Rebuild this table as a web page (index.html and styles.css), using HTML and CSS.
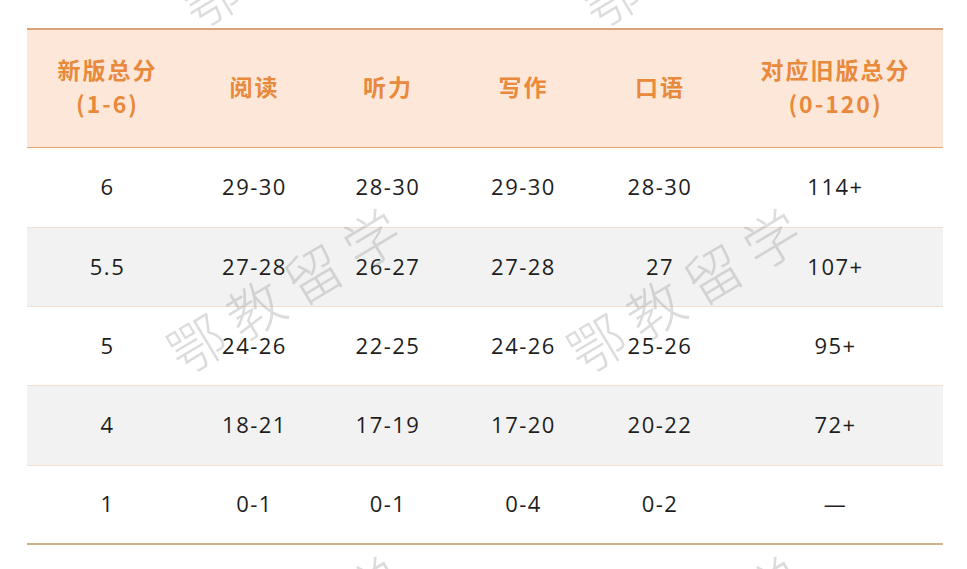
FILE: index.html
```html
<!DOCTYPE html>
<html lang="zh-CN">
<head>
<meta charset="utf-8">
<title>新版托福分数对照</title>
<link rel="stylesheet" href="styles.css">
</head>
<body>
<div class="page">
  <table class="score-table">
    <colgroup>
      <col class="c1"><col class="c2"><col class="c3"><col class="c4"><col class="c5"><col class="c6">
    </colgroup>
    <thead>
      <tr>
        <th>新版总分<br>(1-6)</th>
        <th>阅读</th>
        <th>听力</th>
        <th>写作</th>
        <th>口语</th>
        <th>对应旧版总分<br>(0-120)</th>
      </tr>
    </thead>
    <tbody>
      <tr class="tall"><td>6</td><td>29-30</td><td>28-30</td><td>29-30</td><td>28-30</td><td>114+</td></tr>
      <tr class="alt"><td>5.5</td><td>27-28</td><td>26-27</td><td>27-28</td><td>27</td><td>107+</td></tr>
      <tr><td>5</td><td>24-26</td><td>22-25</td><td>24-26</td><td>25-26</td><td>95+</td></tr>
      <tr class="alt tall"><td>4</td><td>18-21</td><td>17-19</td><td>17-20</td><td>20-22</td><td>72+</td></tr>
      <tr class="last"><td>1</td><td>0-1</td><td>0-1</td><td>0-4</td><td>0-2</td><td>—</td></tr>
    </tbody>
  </table>
  <div class="watermarks" aria-hidden="true">
    <span class="wm wm1">鄂教留学</span>
    <span class="wm wm2">鄂教留学</span>
    <span class="wm wm3">鄂教留学</span>
    <span class="wm wm4">鄂教留学</span>
    <span class="wm wm5">鄂教留学</span>
    <span class="wm wm6">鄂教留学</span>
  </div>
</div>
</body>
</html>
```

FILE: styles.css
```css
html, body {
  margin: 0;
  padding: 0;
  background: #ffffff;
}

.page {
  position: relative;
  width: 967px;
  height: 569px;
  overflow: hidden;
  padding: 28px 0 0 27px;
  box-sizing: border-box;
  font-family: "Open Sans", "Noto Sans CJK SC", sans-serif;
}

.score-table {
  width: 916px;
  border-collapse: collapse;
  table-layout: fixed;
}

.c1 { width: 161px; }
.c2 { width: 133px; }
.c3 { width: 134px; }
.c4 { width: 137px; }
.c5 { width: 136px; }
.c6 { width: 215px; }

.score-table th {
  height: 112px;
  padding: 0 0 5px;
  background: #fce7d8;
  color: #e8893c;
  font-family: "Noto Sans CJK SC", sans-serif;
  font-weight: 700;
  font-size: 23px;
  line-height: 34px;
  letter-spacing: 2px;
  text-align: center;
  vertical-align: middle;
  border-top: 2px solid #dca277;
  border-bottom: 1px solid #e4a473;
}

.score-table td {
  height: 79px;
  padding: 0 0 3px;
  box-sizing: border-box;
  text-align: center;
  vertical-align: middle;
  color: #1e1e1e;
  font-size: 22px;
  letter-spacing: 1.5px;
  border-bottom: 1px solid #f6dfcc;
}

.score-table tr.tall td {
  height: 80px;
}

.score-table tr.alt td {
  background: #f2f2f2;
}

.score-table tr.last td {
  height: 78px;
  border-bottom: 2px solid #cbb48c;
}

.watermarks {
  position: absolute;
  inset: 0;
  pointer-events: none;
}

.wm {
  position: absolute;
  white-space: nowrap;
  font-family: "Noto Sans CJK SC", sans-serif;
  font-weight: 300;
  font-size: 56px;
  letter-spacing: 12px;
  color: rgba(120, 120, 120, 0.26);
  transform: translate(-50%, -50%) rotate(-31deg);
}

.wm1 { left: 302px; top: -60px; }
.wm2 { left: 702px; top: -60px; }
.wm3 { left: 288px; top: 286px; }
.wm4 { left: 688px; top: 286px; }
.wm5 { left: 288px; top: 634px; }
.wm6 { left: 688px; top: 634px; }
```
